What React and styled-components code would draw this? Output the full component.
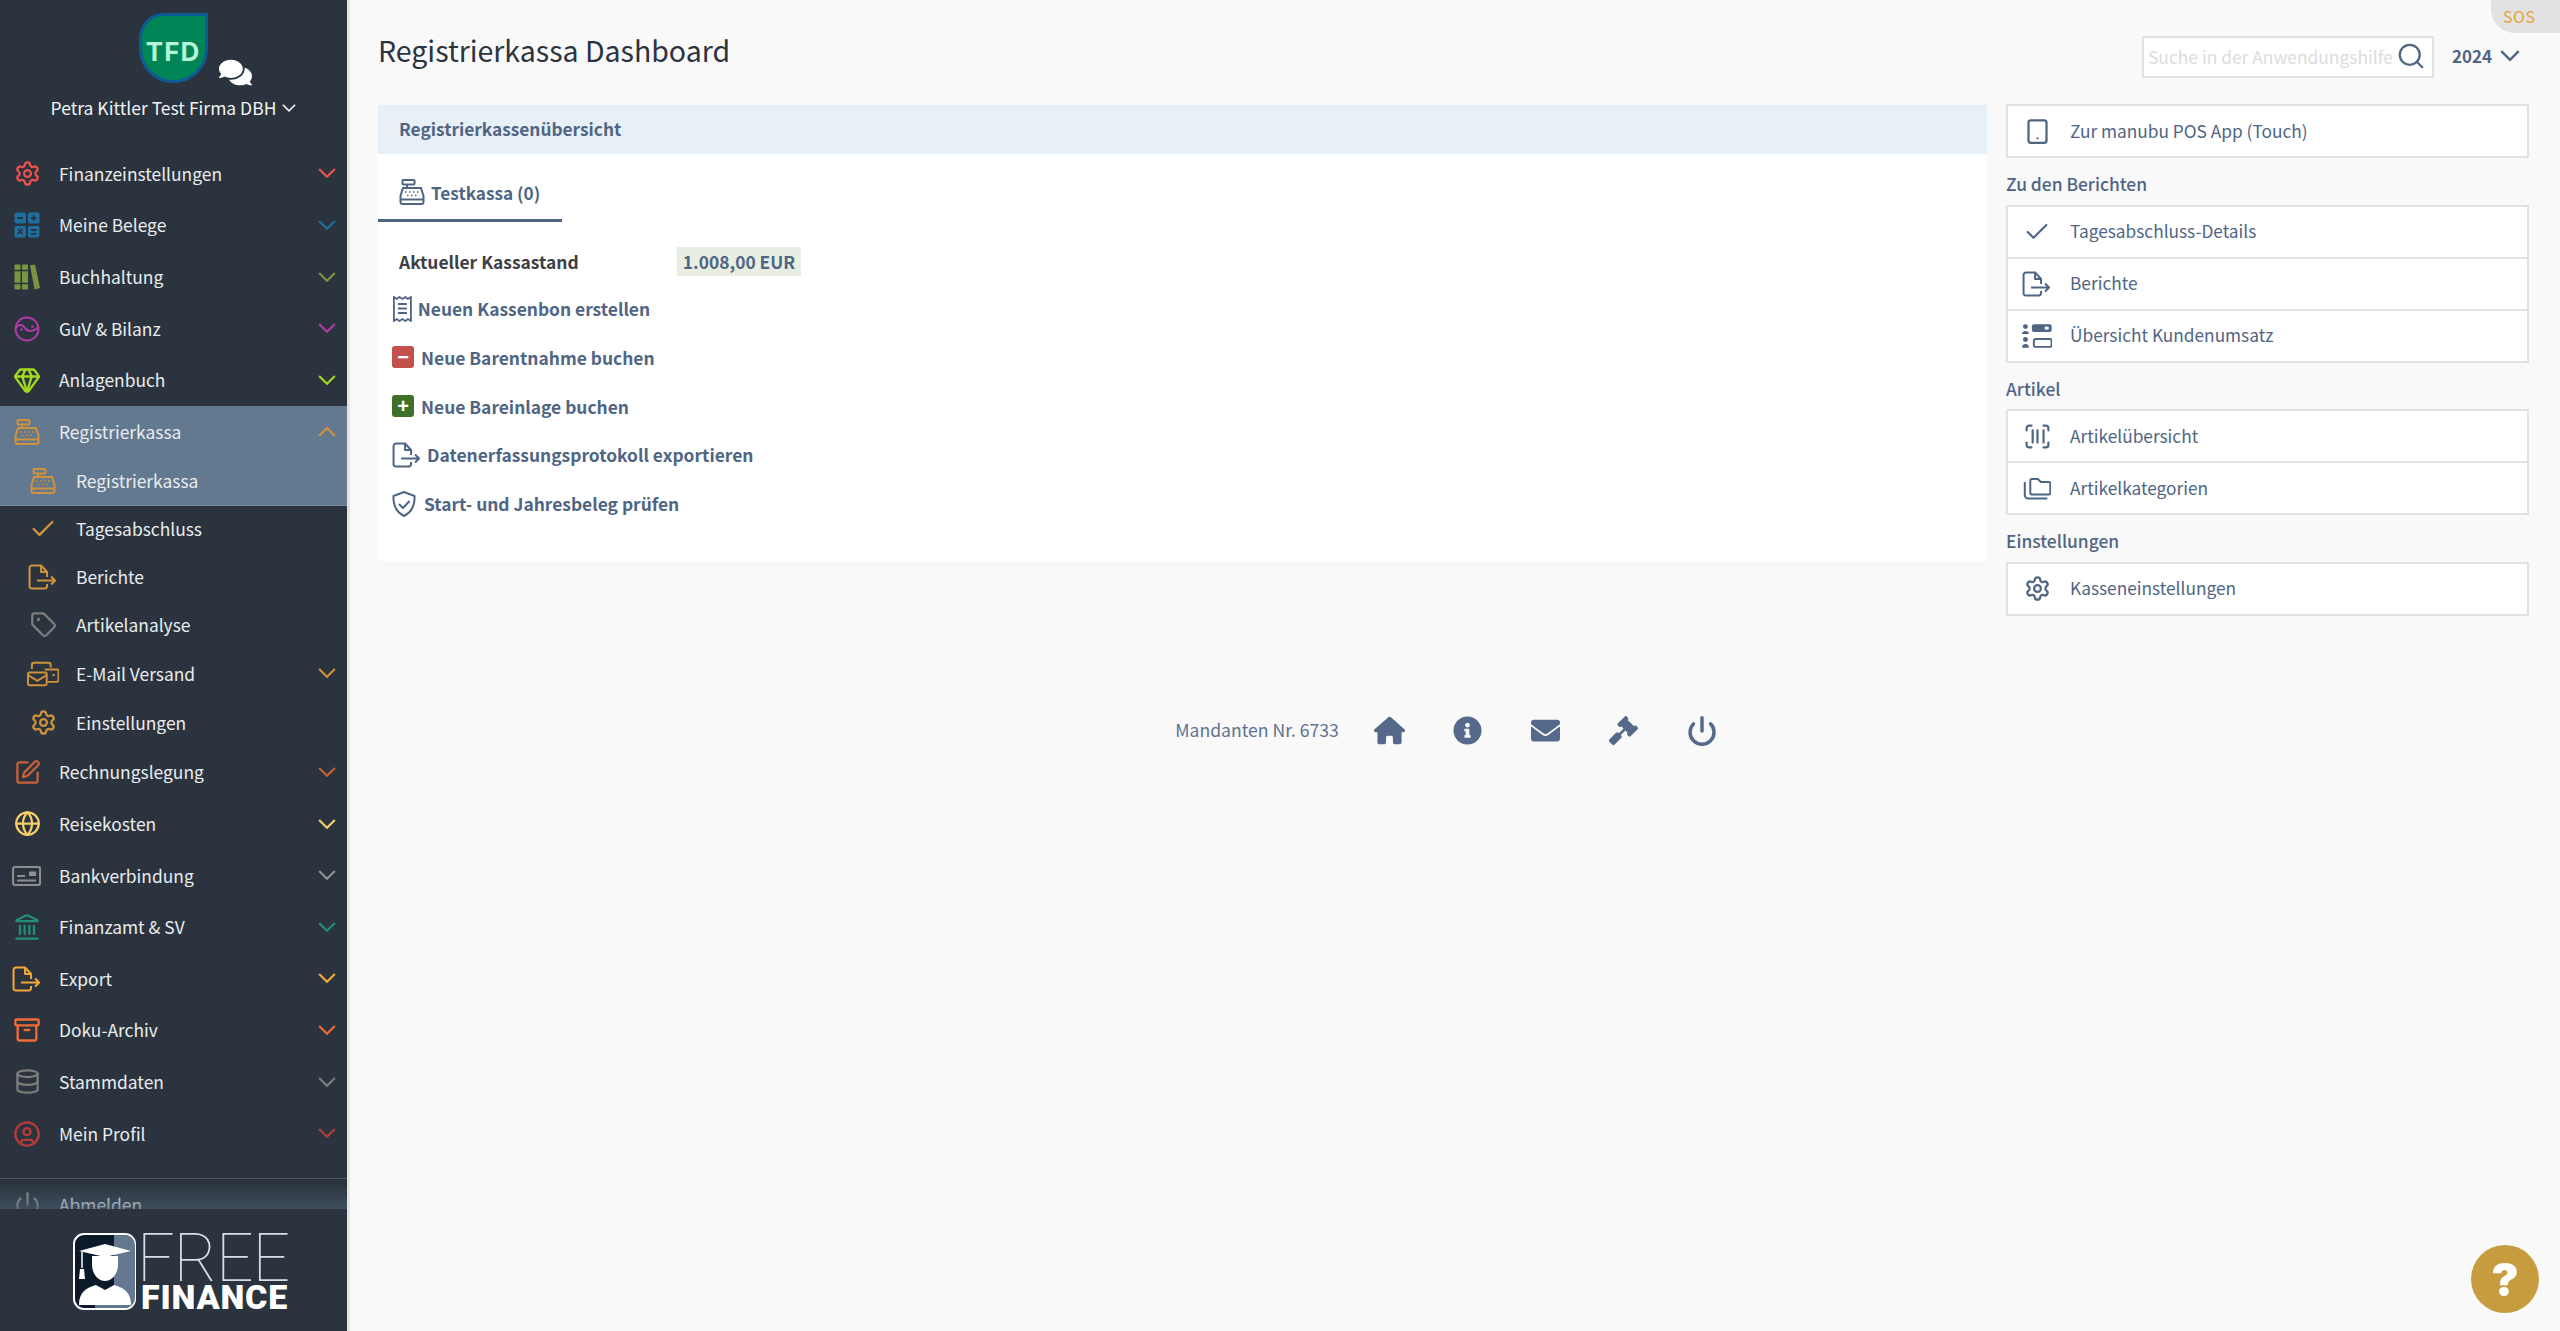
import React from 'react';
import styled, { createGlobalStyle } from 'styled-components';
import {
  Settings, Gem, Check, Tag, SquarePen, Globe, Landmark, Archive, Database,
  CircleUser, Tablet, ScanBarcode, Power, Search,
} from 'lucide-react';
import { FaInfoCircle, FaEnvelope, FaGavel, FaComments } from 'react-icons/fa';
import { FaHouse } from 'react-icons/fa6';

const Global = createGlobalStyle`
  html, body { margin: 0; padding: 0; height: 100%; background: #f9f9f9; }
  body { font-family: "Noto Sans CJK SC", "Noto Sans", sans-serif; overflow: hidden; }
  * { box-sizing: border-box; }
`;

// eigene Icons, die es in den Paketen nicht gibt
const Chevron = ({ up, size = 18 }) => (
  <svg width={size} height={size * 0.6} viewBox="0 0 18 11" fill="none" stroke="currentColor" strokeWidth="2.2">
    <polyline points={up ? '1,10 9,2 17,10' : '1,1 9,9 17,1'} />
  </svg>
);

const CashRegister = ({ size = 26 }) => (
  <svg width={size} height={size} viewBox="0 0 26 26" fill="none" stroke="currentColor" strokeWidth="2">
    <rect x="3.5" y="1" width="12" height="4.5" rx="0.8" />
    <path d="M8 5.5V9" />
    <path d="M4 9h18l2.5 8v6a2 2 0 0 1-2 2h-19a2 2 0 0 1-2-2v-6z" />
    <path d="M1.5 20.5h23" />
    <path d="M6 13h1.5M10 13h1.5M14 13h1.5M18 13h1.5M8 16.5h1.5M12 16.5h1.5M16 16.5h1.5" strokeWidth="1.6" />
  </svg>
);

const FileArrow = ({ size = 26 }) => (
  <svg width={size * 1.12} height={size} viewBox="0 0 29 26" fill="none" stroke="currentColor" strokeWidth="2" strokeLinejoin="round">
    <path d="M19 13V8l-6-6.5H4a2.5 2.5 0 0 0-2.500 2.500v19A2.500 2.500 0 0 0 4 24.500h13a2.500 2.500 0 0 0 2-2V20" />
    <path d="M13 1.500V8h6" />
    <path d="M9 16.500h18M23 12.500l4 4-4 4" />
  </svg>
);

const CalcGrid = ({ size = 26 }) => (
  <svg width={size} height={size} viewBox="0 0 26 26">
    <rect x="0.500" y="0.500" width="11.500" height="11" rx="2" fill="currentColor" />
    <rect x="14" y="0.500" width="11.500" height="11" rx="2" fill="currentColor" />
    <rect x="0.500" y="14" width="11.500" height="11.500" rx="2" fill="currentColor" />
    <rect x="14" y="14" width="11.500" height="11.500" rx="2" fill="currentColor" />
    <path d="M3.500 6h5.500M17 6h5.500M19.700 3.200v5.600M4 17l4.500 5M8.500 17l-4.500 5M17 18h5.500M17 21.800h5.500" stroke="#2b343e" strokeWidth="1.800" />
  </svg>
);

const Books = ({ size = 26 }) => (
  <svg width={size} height={size} viewBox="0 0 26 26" fill="currentColor">
    <rect x="0.500" y="0.500" width="6" height="25" rx="1" />
    <rect x="8" y="0.500" width="6" height="25" rx="1" />
    <path d="M16 1.500l5-1 5 23.500-5.500 1.500z" />
    <path d="M0 6.500h15M0 19.500h15" stroke="#2b343e" strokeWidth="1.500" />
  </svg>
);

const YinYang = ({ size = 26 }) => (
  <svg width={size} height={size} viewBox="0 0 26 26" fill="none" stroke="currentColor" strokeWidth="2">
    <circle cx="13" cy="13" r="11.500" />
    <path d="M2 12c2-4 7-4 9 0s8 4 12.500 0" />
    <circle cx="7.500" cy="13.500" r="1.300" fill="currentColor" stroke="none" />
    <circle cx="18.500" cy="10.500" r="1.300" fill="currentColor" stroke="none" />
  </svg>
);

const MailCard = ({ size = 26 }) => (
  <svg width={size * 1.25} height={size} viewBox="0 0 33 26" fill="none" stroke="currentColor" strokeWidth="2">
    <path d="M5 8V3.500A2 2 0 0 1 7 1.500h15a2 2 0 0 1 2 2v3" />
    <path d="M18 8.500h13a1 1 0 0 1 1 1V19a2 2 0 0 1-2 2h-9" />
    <rect x="1" y="11.500" width="19" height="13" rx="1.500" />
    <path d="M1 14l9.500 6L20 14" />
    <circle cx="27" cy="14" r="1.200" fill="currentColor" stroke="none" />
  </svg>
);

const BankCard = ({ size = 26 }) => (
  <svg width={size * 1.12} height={size} viewBox="0 0 29 26" fill="none" stroke="currentColor" strokeWidth="2">
    <rect x="1" y="4" width="27" height="18" rx="2" />
    <path d="M5 13h8M5 17.500h19" />
    <rect x="17" y="8.500" width="7" height="4.500" fill="currentColor" stroke="none" />
  </svg>
);

const Receipt = ({ size = 26 }) => (
  <svg width={size * 0.8} height={size} viewBox="0 0 20 26" fill="none" stroke="currentColor" strokeWidth="1.800">
    <path d="M1.500 1l3 2 2.500-2 3 2 3-2 2.500 2 3-2v24l-3-2-2.500 2-3-2-3 2-2.500-2-3 2z" />
    <path d="M5.500 8h9M5.500 12.500h9M5.500 17h9" />
  </svg>
);

const ShieldMark = () => (
  <svg width="24" height="26" viewBox="0 0 24 26" fill="none" stroke="currentColor" strokeWidth="2" strokeLinejoin="round">
    <path d="M12 1l10.500 4c.5 9-2.500 16-10.500 20C4 21 1 14 1.500 5z" />
    <path d="M7 13l4 4 6.500-7" />
  </svg>
);

const Folders = ({ size = 26 }) => (
  <svg width={size * 1.1} height={size} viewBox="0 0 28 26" fill="none" stroke="currentColor" strokeWidth="2">
    <path d="M7 18V5.500a1.500 1.500 0 0 1 1.500-1.500h6l3 3h8a1.500 1.500 0 0 1 1.500 1.500V18a1.500 1.500 0 0 1-1.500 1.500h-17A1.500 1.500 0 0 1 7 18z" />
    <path d="M1.500 7v13a3.500 3.500 0 0 0 3.500 3.500h19" />
  </svg>
);

const CustomerList = ({ size = 26 }) => (
  <svg width={size * 1.14} height={size} viewBox="0 0 30 26" fill="currentColor">
    <circle cx="3.500" cy="3.500" r="2.500" />
    <path d="M0 11c0-2 1.500-3 3.500-3S7 9 7 11z" />
    <circle cx="3.500" cy="16.500" r="2.500" />
    <path d="M0 25c0-3 1.500-4 3.500-4S7 22 7 25z" />
    <rect x="10" y="1" width="20" height="8" rx="2" />
    <rect x="12" y="16" width="18" height="8" rx="2" fill="none" stroke="currentColor" strokeWidth="2" />
    <rect x="23" y="3.500" width="4" height="3" fill="#fff" />
  </svg>
);

const mainMenu = [
  { label: 'Finanzeinstellungen', color: '#f0504f', icon: <Settings size={27} strokeWidth={2} /> },
  { label: 'Meine Belege', color: '#1f6f9e', icon: <CalcGrid /> },
  { label: 'Buchhaltung', color: '#7a9440', icon: <Books /> },
  { label: 'GuV & Bilanz', color: '#b03ba8', icon: <YinYang /> },
  { label: 'Anlagenbuch', color: '#a4d91f', icon: <Gem size={28} strokeWidth={2} /> },
];

const subMenu = [
  { label: 'Registrierkassa', color: '#d0923a', icon: <CashRegister />, h: 47 },
  { label: 'Tagesabschluss', color: '#d0923a', icon: <Check size={28} strokeWidth={2} />, h: 47 },
  { label: 'Berichte', color: '#d0923a', icon: <FileArrow />, h: 48 },
  { label: 'Artikelanalyse', color: '#7d7d7d', icon: <Tag size={27} strokeWidth={2} />, h: 48 },
  { label: 'E-Mail Versand', color: '#d0923a', icon: <MailCard />, h: 50, sub: true },
  { label: 'Einstellungen', color: '#d0923a', icon: <Settings size={27} strokeWidth={2} />, h: 48 },
];

const moreMenu = [
  { label: 'Rechnungslegung', color: '#c9603a', icon: <SquarePen size={27} strokeWidth={2} /> },
  { label: 'Reisekosten', color: '#f5cf6a', icon: <Globe size={27} strokeWidth={2} /> },
  { label: 'Bankverbindung', color: '#8f8f8f', icon: <BankCard /> },
  { label: 'Finanzamt & SV', color: '#1f8f78', icon: <Landmark size={28} strokeWidth={2} /> },
  { label: 'Export', color: '#f5a83a', icon: <FileArrow /> },
  { label: 'Doku-Archiv', color: '#f26b35', icon: <Archive size={28} strokeWidth={2} /> },
  { label: 'Stammdaten', color: '#7d7d7d', icon: <Database size={27} strokeWidth={2} /> },
  { label: 'Mein Profil', color: '#b53a3a', icon: <CircleUser size={28} strokeWidth={2} /> },
];

const actions = [
  { label: 'Neuen Kassenbon erstellen', icon: <Receipt />, gap: 5 },
  { label: 'Neue Barentnahme buchen', icon: <ActionBox bg="#c4504b">−</ActionBox>, gap: 7 },
  { label: 'Neue Bareinlage buchen', icon: <ActionBox bg="#3f7029">+</ActionBox>, gap: 7 },
  { label: 'Datenerfassungsprotokoll exportieren', icon: <FileArrow />, gap: 6 },
  { label: 'Start- und Jahresbeleg prüfen', icon: <ShieldMark />, gap: 8 },
];

const sideGroups = [
  { title: 'Zu den Berichten', rows: [
    { label: 'Tagesabschluss-Details', icon: <Check size={28} strokeWidth={1.8} /> },
    { label: 'Berichte', icon: <FileArrow /> },
    { label: 'Übersicht Kundenumsatz', icon: <CustomerList /> },
  ] },
  { title: 'Artikel', rows: [
    { label: 'Artikelübersicht', icon: <ScanBarcode size={29} strokeWidth={1.8} /> },
    { label: 'Artikelkategorien', icon: <Folders /> },
  ] },
  { title: 'Einstellungen', rows: [
    { label: 'Kasseneinstellungen', icon: <Settings size={27} strokeWidth={2} /> },
  ] },
];

export default function App() {
  return (
    <Page>
      <Global />
      <Sidebar>
        <Brand>
          <BrandTop>
            <Shield>TFD</Shield>
            <Chat><FaComments size={33} /></Chat>
          </BrandTop>
          <Company>Petra Kittler Test Firma DBH <Chevron size={14} /></Company>
        </Brand>

        <Nav>
          {mainMenu.map(m => <MenuRow key={m.label} item={m} />)}
          <OpenGroup>
            <MenuRow item={{ label: 'Registrierkassa', color: '#d0923a', icon: <CashRegister /> }} open />
            <SubRow item={subMenu[0]} />
          </OpenGroup>
          {subMenu.slice(1).map(m => <SubRow key={m.label} item={m} />)}
          {moreMenu.map(m => <MenuRow key={m.label} item={m} />)}
          <Logout>
            <IconSlot $color="#8f8f8f"><Power size={27} strokeWidth={2} /></IconSlot>
            <RowLabel $main>Abmelden</RowLabel>
          </Logout>
        </Nav>

        <LogoArea>
          <svg width="63" height="77" viewBox="0 0 63 77">
            <rect x="1" y="1" width="61" height="75" rx="10" fill="#0b1a2b" stroke="#fff" strokeWidth="2" />
            <path d="M41 2h11a10 10 0 0 1 10 10v53a10 10 0 0 1-10 10H22V60h19z" fill="#64798f" />
            <path d="M6 18l26-7 26 7-26 6z" fill="#fff" />
            <path d="M19 23h26v8c0 10-6 17-13 17s-13-7-13-17z" fill="#fff" />
            <path d="M9 19v16" stroke="#fff" strokeWidth="1.500" />
            <path d="M7 36h4l1 10H6z" fill="#fff" />
            <path d="M6 72c0-12 6-17 17-20l9 5 9-5c11 3 17 8 17 20z" fill="#fff" />
          </svg>
          <LogoWords>
            <LogoFree>FREE</LogoFree>
            <LogoFinance>FINANCE</LogoFinance>
          </LogoWords>
        </LogoArea>
      </Sidebar>

      <Main>
        <SosPill>SOS</SosPill>
        <TopBar>
          <Title>Registrierkassa Dashboard</Title>
          <TopRight>
            <SearchBox>
              <SearchText>Suche in der Anwendungshilfe</SearchText>
              <Search size={30} strokeWidth={1.8} />
            </SearchBox>
            <Year>2024 <Chevron size={20} /></Year>
          </TopRight>
        </TopBar>

        <Columns>
          <Panel>
            <PanelHead>Registrierkassenübersicht</PanelHead>
            <Tab><CashRegister />Testkassa (0)</Tab>
            <Balance>
              <BalanceLabel>Aktueller Kassastand</BalanceLabel>
              <BalanceValue>1.008,00 EUR</BalanceValue>
            </Balance>
            <Actions>
              {actions.map(a => (
                <Action key={a.label} $gap={a.gap}>{a.icon}{a.label}</Action>
              ))}
            </Actions>
          </Panel>

          <Aside>
            <LinkGroup>
              <LinkRow><LinkIcon><Tablet size={27} strokeWidth={2} /></LinkIcon>Zur manubu POS App (Touch)</LinkRow>
            </LinkGroup>
            {sideGroups.map(g => (
              <React.Fragment key={g.title}>
                <GroupTitle>{g.title}</GroupTitle>
                <LinkGroup>
                  {g.rows.map(r => (
                    <LinkRow key={r.label}><LinkIcon>{r.icon}</LinkIcon>{r.label}</LinkRow>
                  ))}
                </LinkGroup>
              </React.Fragment>
            ))}
          </Aside>
        </Columns>

        <FooterBar>
          <FooterText>Mandanten Nr. 6733</FooterText>
          <FooterIcon><FaHouse size={31} /></FooterIcon>
          <FooterIcon><FaInfoCircle size={29} /></FooterIcon>
          <FooterIcon><FaEnvelope size={29} /></FooterIcon>
          <FooterIcon><FaGavel size={29} /></FooterIcon>
          <FooterIcon><Power size={32} strokeWidth={2.6} /></FooterIcon>
        </FooterBar>

        <HelpButton>?</HelpButton>
      </Main>
    </Page>
  );
}

function MenuRow({ item, open }) {
  return (
    <Row>
      <IconSlot $color={item.color}>{item.icon}</IconSlot>
      <RowLabel $main>{item.label}</RowLabel>
      <Arrow $color={item.color}><Chevron up={open} /></Arrow>
    </Row>
  );
}

function SubRow({ item }) {
  return (
    <Sub $h={item.h}>
      <IconSlot $color={item.color}>{item.icon}</IconSlot>
      <RowLabel>{item.label}</RowLabel>
      {item.sub && <Arrow $color={item.color}><Chevron /></Arrow>}
    </Sub>
  );
}

function ActionBox({ bg, children }) {
  return <ActionSquare $bg={bg}>{children}</ActionSquare>;
}

const Page = styled.div`
  display: flex;
  height: 1331px;
  background: #f9f9f9;
`;

const Sidebar = styled.aside`
  width: 350px;
  flex: none;
  display: flex;
  flex-direction: column;
  background: #2b343e;
  border-right: 3px solid #e4e4e4;
  color: #e9ecef;
`;

const Brand = styled.div`
  height: 148px;
  flex: none;
  padding-top: 13px;
  display: flex;
  flex-direction: column;
  align-items: center;
`;

const BrandTop = styled.div`
  display: flex;
  align-items: flex-end;
  gap: 11px;
  margin-left: 43px;
  height: 70px;
`;

const Shield = styled.div`
  width: 69px;
  height: 70px;
  background: #008556;
  border: 3px solid #0e5a94;
  border-radius: 26px 0 36px 36px;
  color: #b5f5d8;
  font: 700 26px/71px "Inter", sans-serif;
  text-align: center;
  letter-spacing: 1px;
`;

const Chat = styled.div`
  color: #fff;
  height: 33px;
  margin-bottom: -6px;
`;

const Company = styled.div`
  margin-top: 13px;
  font-size: 17.500px;
  line-height: 24px;
  display: flex;
  align-items: center;
  gap: 6px;
  color: #f1f3f5;
`;

const Nav = styled.nav`
  flex: 1;
  overflow: hidden;
  position: relative;
  &::after {
    content: '';
    position: absolute;
    left: 0;
    right: 0;
    bottom: 0;
    height: 26px;
    background: linear-gradient(rgba(75, 95, 115, 0), rgba(75, 95, 115, 0.6));
  }
`;

const Row = styled.div`
  height: 51.600px;
  display: flex;
  align-items: center;
  padding: 0 11px 0 7px;
  font-size: 17.400px;
`;

const OpenGroup = styled.div`
  background: #63798f;
  border-bottom: 1px solid #778ba0;
`;

const Sub = styled.div`
  height: ${p => p.$h}px;
  display: flex;
  align-items: center;
  padding: 0 11px 0 23px;
  font-size: 17.400px;
`;

const IconSlot = styled.span`
  width: 40px;
  height: 30px;
  flex: none;
  display: flex;
  align-items: center;
  justify-content: center;
  color: ${p => p.$color};
  margin-right: 13px;
`;

const RowLabel = styled.span`
  flex: 1;
  line-height: 26px;
  color: #e9ecef;
  margin-left: ${p => (p.$main ? '-1px' : '0')};
`;

const Arrow = styled.span`
  display: flex;
  color: ${p => p.$color};
`;

const Logout = styled.div`
  margin-top: 19px;
  border-top: 1px solid #4a5766;
  height: 51.800px;
  display: flex;
  align-items: center;
  padding: 0 12px 0 7px;
  font-size: 17.400px;
`;

const LogoArea = styled.div`
  height: 122px;
  flex: none;
  display: flex;
  align-items: flex-start;
  gap: 5px;
  padding: 24px 0 0 73px;
`;

const LogoWords = styled.div`
  display: flex;
  flex-direction: column;
  width: 148px;
`;

const LogoFree = styled.div`
  font: 100 66px/48px "Roboto", sans-serif;
  letter-spacing: -1px;
  color: #d8dde2;
  height: 52px;
  margin: 2px 0 -2px -4px;
`;

const LogoFinance = styled.div`
  font: 900 34px/25px "Roboto", sans-serif;
  color: #fff;
  letter-spacing: 0.800px;
`;

const Main = styled.main`
  flex: 1;
  min-width: 0;
  position: relative;
  padding: 0 31px 0 28px;
`;

const SosPill = styled.div`
  position: absolute;
  top: 0;
  right: 0;
  width: 69px;
  height: 33px;
  background: #e2e2e2;
  border-radius: 0 0 0 24px;
  color: #e8a33b;
  font-size: 16px;
  line-height: 33px;
  padding-left: 12px;
  letter-spacing: 0.500px;
`;

const TopBar = styled.header`
  height: 105px;
  display: flex;
  justify-content: space-between;
  align-items: flex-start;
`;

const Title = styled.h1`
  margin: 29px 0 0;
  font-size: 28.500px;
  line-height: 42px;
  font-weight: 400;
  color: #2b343e;
`;

const TopRight = styled.div`
  display: flex;
  align-items: center;
  gap: 18px;
  margin-top: 36px;
`;

const SearchBox = styled.div`
  width: 292px;
  height: 42px;
  display: flex;
  align-items: center;
  justify-content: space-between;
  background: #fff;
  border: 2px solid #e2e2e2;
  padding: 0 6px 2px 4px;
  color: #4f6584;
`;

const SearchText = styled.span`
  color: #dcdcdc;
  font-size: 17.400px;
  white-space: nowrap;
`;

const Year = styled.div`
  display: flex;
  align-items: center;
  gap: 8px;
  font-size: 17px;
  font-weight: 700;
  color: #4f6584;
  width: 77px;
  padding-bottom: 3px;
`;

const Columns = styled.div`
  display: grid;
  grid-template-columns: 1609px 523px;
  gap: 19px;
  align-items: start;
`;

const Panel = styled.section`
  background: #fff;
  height: 456px;
`;

const PanelHead = styled.div`
  height: 49px;
  background: #e8f0f7;
  padding-left: 21px;
  font-size: 17.300px;
  font-weight: 700;
  line-height: 47px;
  color: #4f6584;
`;

const Tab = styled.div`
  width: 184px;
  height: 68px;
  padding: 11px 0 0 21px;
  display: flex;
  align-items: center;
  gap: 6px;
  font-size: 17.200px;
  font-weight: 700;
  color: #4f6584;
  border-bottom: 3px solid #4f6584;
`;

const Balance = styled.div`
  display: flex;
  align-items: center;
  margin: 25px 0 0 21px;
  height: 29px;
`;

const BalanceLabel = styled.span`
  width: 278px;
  font-size: 17.400px;
  font-weight: 700;
  color: #3c4046;
`;

const BalanceValue = styled.span`
  width: 124px;
  height: 29px;
  background: #e8eee2;
  font-size: 17.400px;
  font-weight: 700;
  line-height: 29px;
  text-align: center;
  color: #4f6584;
`;

const Actions = styled.div`
  display: flex;
  flex-direction: column;
  gap: 19.800px;
  margin: 18px 0 0 14px;
`;

const Action = styled.div`
  height: 29px;
  display: flex;
  align-items: center;
  gap: ${p => p.$gap}px;
  font-size: 17.400px;
  font-weight: 700;
  color: #4f6584;
`;

const ActionSquare = styled.span`
  width: 22px;
  height: 22px;
  border-radius: 3px;
  background: ${p => p.$bg};
  color: #fff;
  font: 700 20px/22px "Liberation Sans", sans-serif;
  text-align: center;
`;

const Aside = styled.div`
  display: flex;
  flex-direction: column;
  margin-top: -1px;
`;

const GroupTitle = styled.div`
  height: 46.600px;
  padding-top: 14px;
  font-size: 17.400px;
  font-weight: 500;
  line-height: 24px;
  color: #4f6584;
`;

const LinkGroup = styled.div`
  background: #fff;
  border: 2px solid #e2e2e2;
`;

const LinkRow = styled.div`
  height: 50px;
  display: flex;
  align-items: center;
  padding-bottom: 2px;
  font-size: 17.300px;
  color: #4f6584;
  & + & {
    height: 52px;
    border-top: 2px solid #e2e2e2;
  }
`;

const LinkIcon = styled.span`
  width: 58px;
  display: flex;
  justify-content: center;
  flex: none;
  margin: 2px 4px 0 0;
`;

const FooterBar = styled.div`
  display: flex;
  align-items: center;
  justify-content: center;
  margin: 93px 0 0 9px;
  height: 44px;
  color: #55698a;
`;

const FooterText = styled.span`
  font-size: 17.600px;
  color: #5f7390;
  margin-right: 12px;
  padding-bottom: 2px;
`;

const FooterIcon = styled.span`
  width: 78px;
  display: flex;
  justify-content: center;
`;

const HelpButton = styled.div`
  position: fixed;
  right: 21px;
  bottom: 18px;
  width: 68px;
  height: 68px;
  border-radius: 50%;
  background: #c69c3f;
  color: #fff;
  font: 900 46px/68px "Inter", sans-serif;
  text-align: center;
`;
